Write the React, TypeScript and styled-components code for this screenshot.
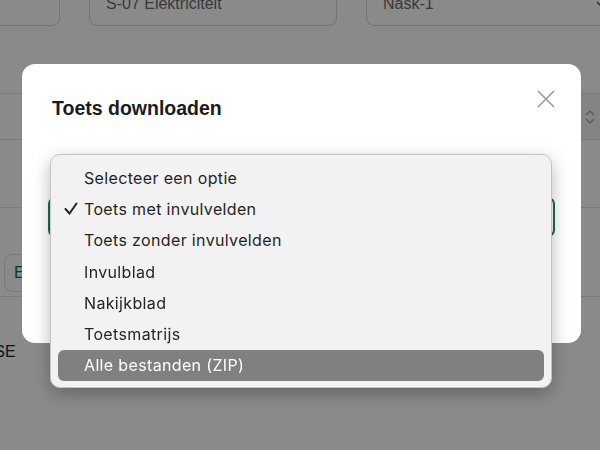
import React from 'react';
import styled, { createGlobalStyle } from 'styled-components';

const GlobalStyle = createGlobalStyle`
  html, body {
    margin: 0;
    padding: 0;
    width: 600px;
    height: 450px;
    overflow: hidden;
    background: #ffffff;
    font-family: 'Liberation Sans', Arial, sans-serif;
  }
`;

const Page = styled.div`
  width: 600px;
  height: 450px;
  overflow: hidden;
  background: #ffffff;
`;

const FilterRow = styled.div`
  display: grid;
  grid-template-columns: 250px 248px 260px;
  gap: 29px;
  margin: -18px 0 0 -190px;
`;

const FilterBox = styled.div`
  height: 44px;
  box-sizing: border-box;
  border: 1px solid #d6d6d6;
  border-radius: 8px;
  padding: 0 16px;
  display: flex;
  align-items: center;
  justify-content: space-between;
  font-size: 16px;
  color: #6b6b6b;
`;

const Table = styled.div`
  margin-top: 67px;
  border-top: 1px solid #e2e2e2;
`;

const TableRow = styled.div<{ h: number }>`
  height: ${(p) => p.h}px;
  box-sizing: border-box;
  border-bottom: 1px solid #e2e2e2;
  display: flex;
  justify-content: space-between;
  align-items: flex-end;
`;

const NumberCell = styled.div`
  width: 20px;
  height: 100%;
  background: #f4f4f4;
  display: flex;
  align-items: center;
  justify-content: center;
`;

const SmallButton = styled.div`
  margin: 0 0 4px 4px;
  height: 38px;
  width: 40px;
  box-sizing: border-box;
  border: 1px solid #d8dfd9;
  border-radius: 8px;
  padding-left: 9px;
  display: flex;
  align-items: center;
  color: #1d6b4f;
  font-size: 16px;
`;

const FooterLabel = styled.div`
  margin-top: 46px;
  margin-left: -28px;
  font-size: 16px;
  color: #222;
`;

const Overlay = styled.div`
  position: fixed;
  inset: 0;
  background: rgba(0, 0, 0, 0.46);
  padding: 64px 0 0 22px;
  box-sizing: border-box;
`;

const Modal = styled.div`
  position: relative;
  width: 559px;
  height: 279px;
  box-sizing: border-box;
  background: #ffffff;
  border-radius: 13px;
  padding: 30px 26px;
`;

const Header = styled.div`
  display: flex;
  justify-content: space-between;
  align-items: center;
  padding-left: 4px;
`;

const Title = styled.h2`
  margin: 0;
  font-size: 19.5px;
  font-weight: 700;
  color: #1c1c1c;
  line-height: 28px;
`;

const CloseButton = styled.div`
  width: 18px;
  height: 18px;
  margin: -18px 0 0 0;
  display: flex;
`;

const Select = styled.div`
  margin-top: 75px;
  height: 40px;
  box-sizing: border-box;
  border: 2px solid #1d6b4f;
  border-radius: 7px;
`;

const Menu = styled.ul`
  position: absolute;
  left: 28px;
  top: 90px;
  width: 502px;
  margin: 0;
  padding: 7px 7px 6px;
  box-sizing: border-box;
  list-style: none;
  background: #f2f2f2;
  border: 1px solid #c4c4c4;
  border-radius: 10px;
  box-shadow: 0 6px 18px rgba(0, 0, 0, 0.28);
  font-family: Inter, 'Noto Sans', sans-serif;
`;

const Item = styled.li<{ active?: boolean }>`
  position: relative;
  height: 31.3px;
  display: flex;
  align-items: center;
  padding-left: 26px;
  border-radius: 6px;
  font-size: 16px;
  letter-spacing: 0.35px;
  color: ${(p) => (p.active ? '#ffffff' : '#252525')};
  background: ${(p) => (p.active ? '#808080' : 'transparent')};
`;

const Check = styled.span`
  position: absolute;
  left: 6px;
  top: 9px;
  display: flex;
`;

const options = [
  'Selecteer een optie',
  'Toets met invulvelden',
  'Toets zonder invulvelden',
  'Invulblad',
  'Nakijkblad',
  'Toetsmatrijs',
  'Alle bestanden (ZIP)',
];

const App = () => {
  return (
    <>
      <GlobalStyle />
      <Page>
        <FilterRow>
          <FilterBox />
          <FilterBox>S-07 Elektriciteit</FilterBox>
          <FilterBox>
            Nask-1
            <svg width="14" height="14" viewBox="0 0 14 14" fill="none" stroke="#555" strokeWidth="1.5">
              <path d="M2 5l5 5 5-5" />
            </svg>
          </FilterBox>
        </FilterRow>
        <Table>
          <TableRow h={46}>
            <span />
            <NumberCell>
              <svg width="12" height="16" viewBox="0 0 12 16" fill="none" stroke="#a0a0a0" strokeWidth="1.2">
                <path d="M2 6l4-4 4 4M2 10l4 4 4-4" />
              </svg>
            </NumberCell>
          </TableRow>
          <TableRow h={68} />
          <TableRow h={89}>
            <SmallButton>E</SmallButton>
          </TableRow>
        </Table>
        <FooterLabel>CASE</FooterLabel>
      </Page>
      <Overlay>
        <Modal>
          <Header>
            <Title>Toets downloaden</Title>
            <CloseButton>
              <svg width="18" height="18" viewBox="0 0 18 18" fill="none" stroke="#9a9a9a" strokeWidth="1.6">
                <path d="M1 1l16 16M17 1L1 17" />
              </svg>
            </CloseButton>
          </Header>
          <Select />
          <Menu>
            {options.map((o, i) => (
              <Item key={o} active={i === options.length - 1}>
                {i === 1 && (
                  <Check>
                    <svg width="14" height="13" viewBox="0 0 14 13" fill="none" stroke="#252525" strokeWidth="2" strokeLinecap="round">
                      <path d="M1.5 7l4 4.5L12.5 1.5" />
                    </svg>
                  </Check>
                )}
                {o}
              </Item>
            ))}
          </Menu>
        </Modal>
      </Overlay>
    </>
  );
};

export default App;
